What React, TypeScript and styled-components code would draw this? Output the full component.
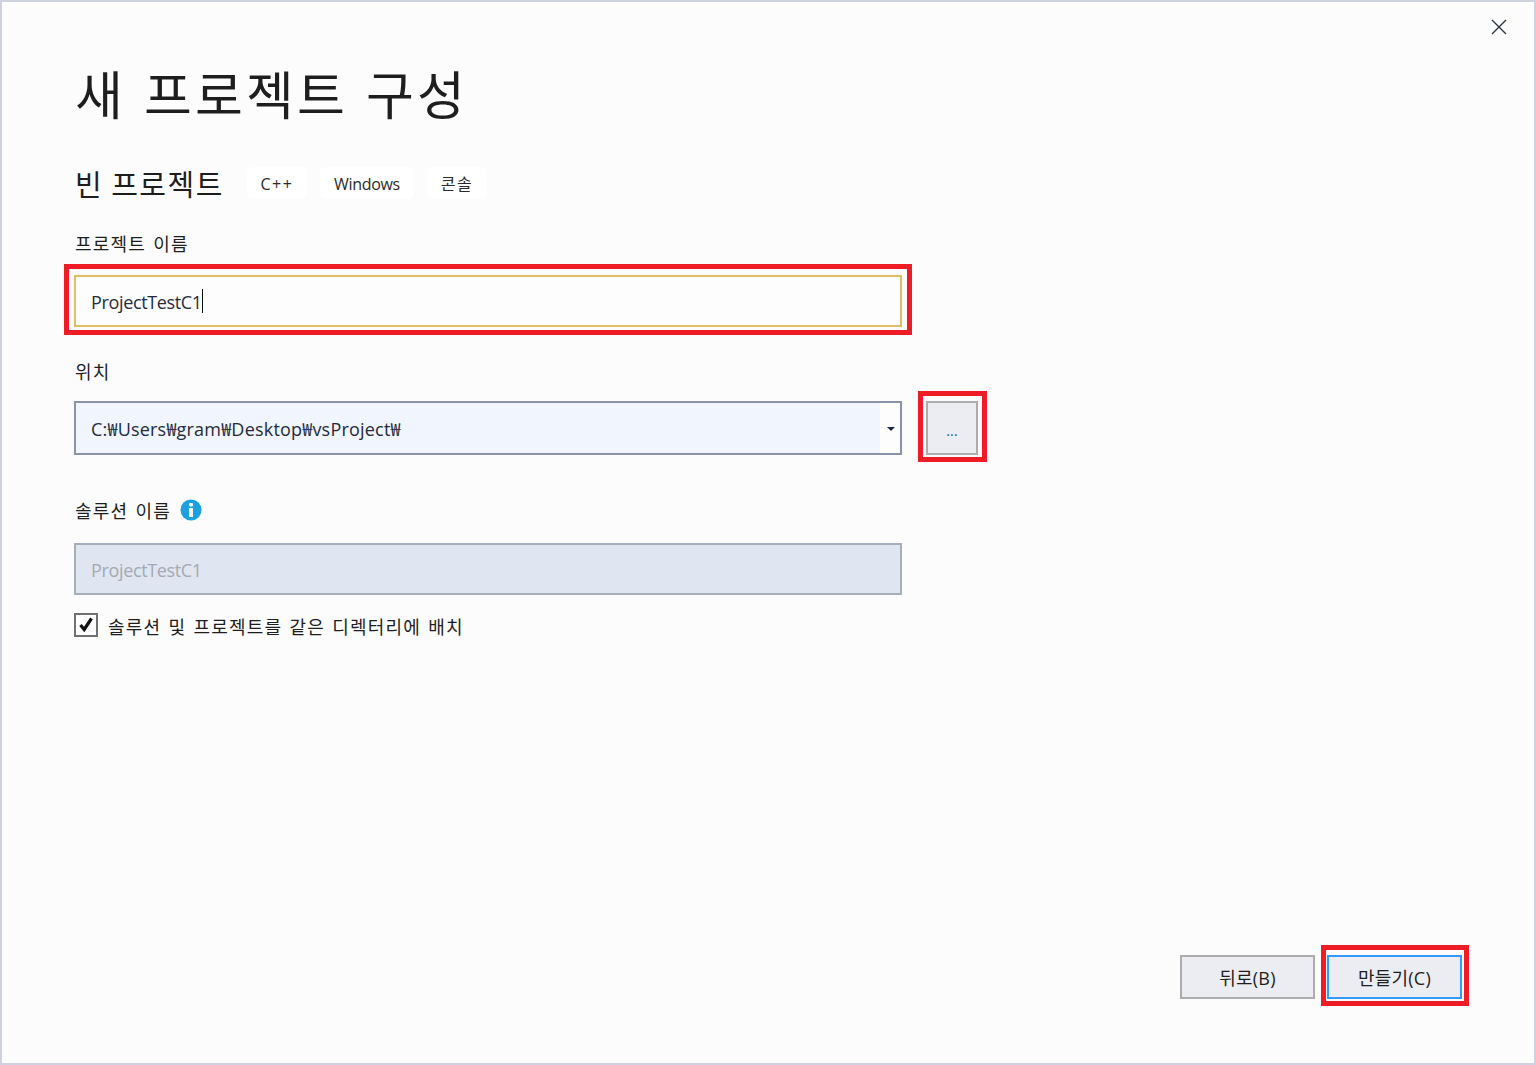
import React from 'react';
import styled, { createGlobalStyle } from 'styled-components';

const GlobalStyle = createGlobalStyle`
  html, body {
    margin: 0;
    padding: 0;
    background: #fcfcfc;
  }
  body {
    font-family: "Open Sans", "Noto Sans CJK KR", sans-serif;
    color: #1e1e1e;
  }
`

const Window = styled.div`
  box-sizing: border-box;
  width: 1536px;
  height: 1065px;
  border: 2px solid #cdd1e0;
  background: #fcfcfc;
  display: flex;
  flex-direction: column;
`

const TitleBar = styled.div`
  height: 58px;
  display: flex;
  justify-content: flex-end;
  align-items: flex-start;
  padding: 17px 27px 0 0;
  box-sizing: border-box;
`

const CloseButton = styled.button`
  border: 0;
  background: none;
  padding: 0;
  width: 16px;
  height: 16px;
  display: flex;
  color: #2b3548;
`

const Content = styled.div`
  flex: 1;
  display: flex;
  flex-direction: column;
  padding: 0 72px 64px;
`

const Title = styled.h1`
  margin: 0;
  height: 70px;
  line-height: 66px;
  font-size: 52px;
  font-weight: 400;
  letter-spacing: 3.2px;
  word-spacing: 3px;
  padding-left: 1px;
  font-family: "Noto Sans CJK KR", sans-serif;
`

const SubtitleRow = styled.div`
  margin-top: 37px;
  height: 32px;
  display: flex;
  align-items: center;
  gap: 13px;
`

const Subtitle = styled.h2`
  margin: 0 10px 0 1px;
  font-size: 29px;
  font-weight: 400;
  font-family: "Noto Sans CJK KR", sans-serif;
  letter-spacing: 1.5px;
  word-spacing: 0;
  line-height: 32px;
  white-space: nowrap;
`

const Chip = styled.span<{ $width: number; $tracking: number }>`
  box-sizing: border-box;
  width: ${p => p.$width}px;
  height: 32px;
  border-radius: 6px;
  background: #fff;
  font-size: 16px;
  line-height: 34px;
  text-align: center;
  letter-spacing: ${p => p.$tracking}px;
  color: #2a2a2a;
`

const Label = styled.div<{ $top: number }>`
  margin-top: ${p => p.$top}px;
  height: 24px;
  line-height: 24px;
  font-size: 18px;
  font-weight: 400;
  display: flex;
  align-items: center;
  font-family: "Noto Sans CJK KR", sans-serif;
  letter-spacing: 1.2px;
  word-spacing: 2px;
  padding-left: 1px;
`

const FieldRow = styled.div<{ $top: number }>`
  margin-top: ${p => p.$top}px;
  display: flex;
  gap: 24px;
`

const Field = styled.div`
  position: relative;
  box-sizing: border-box;
  width: 828px;
  height: 52px;
  padding-left: 15px;
  border: 2px solid #e3be63;
  background: #fdfdfd;
  font-size: 18px;
  letter-spacing: -0.35px;
  line-height: 50px;
  display: flex;
  color: #242c3a;
`

const DisabledField = styled(Field)`
  border-color: #a6aebd;
  background: #dfe6f1;
  color: #a5a9b2;
`

const Caret = styled.span`
  width: 1px;
  height: 24px;
  margin-top: 12px;
  background: #111;
`

const Combo = styled.div`
  box-sizing: border-box;
  width: 828px;
  height: 54px;
  border: 2px solid #8a94a8;
  background: #fdfdfd;
  display: flex;
`

const ComboValue = styled.div`
  flex: 1;
  padding-left: 15px;
  background: #f0f5fe;
  font-size: 18px;
  letter-spacing: 0.2px;
  line-height: 52px;
  color: #242c3a;
`

const ComboArrow = styled.div`
  width: 20px;
  padding: 2px 0 0 1px;
  box-sizing: border-box;
  display: flex;
  align-items: center;
  justify-content: center;

  &::before {
    content: '';
    border-top: 4px solid #1e2a44;
    border-left: 4px solid transparent;
    border-right: 4px solid transparent;
  }
`

const Button = styled.button<{ $accent?: boolean }>`
  position: relative;
  box-sizing: border-box;
  width: 135px;
  height: 44px;
  padding: 0;
  border: 2px solid ${p => (p.$accent ? '#3399ff' : '#acacac')};
  background: #ecedf2;
  color: #1e1e1e;
  font-family: "Open Sans", "Noto Sans CJK KR", sans-serif;
  font-size: 18px;
  letter-spacing: 0.2px;
`

const BrowseButton = styled(Button)`
  width: 52px;
  height: 54px;
  font-size: 14px;
  color: #1c5a96;
  padding-top: 4px;
`

// red annotation boxes drawn on top of the screenshot
const Highlight = styled.span<{ $t: number; $r: number; $b: number; $l: number }>`
  position: absolute;
  top: ${p => p.$t}px;
  right: ${p => p.$r}px;
  bottom: ${p => p.$b}px;
  left: ${p => p.$l}px;
  border: 5px solid #ee1c25;
  pointer-events: none;
`

const InfoIcon = styled.svg`
  margin-left: 9px;
  width: 22px;
  height: 22px;
`

const CheckRow = styled.label`
  margin-top: 18px;
  display: flex;
  align-items: center;
  height: 24px;
  font-size: 18px;
  font-weight: 400;
  font-family: "Noto Sans CJK KR", sans-serif;
  letter-spacing: 1.2px;
  word-spacing: 2px;
`

const CheckText = styled.span`
  padding-top: 2px;
`

const CheckBox = styled.span`
  box-sizing: border-box;
  width: 24px;
  height: 24px;
  margin-right: 10px;
  border: 2px solid #707070;
  background: #fff;
  display: flex;
  align-items: center;
  justify-content: center;
`

const Footer = styled.div`
  margin-top: auto;
  display: flex;
  justify-content: flex-end;
  gap: 12px;
`

const App: React.FC = () => {
  return (
    <Window>
      <GlobalStyle />
      <TitleBar>
        <CloseButton aria-label="닫기">
          <svg width="16" height="16" viewBox="0 0 16 16">
            <path d="M1 1L15 15M15 1L1 15" stroke="currentColor" strokeWidth="1.4" fill="none" />
          </svg>
        </CloseButton>
      </TitleBar>
      <Content>
        <Title>새 프로젝트 구성</Title>
        <SubtitleRow>
          <Subtitle>빈 프로젝트</Subtitle>
          <Chip $width={60} $tracking={1.5}>C++</Chip>
          <Chip $width={94} $tracking={-0.3}>Windows</Chip>
          <Chip $width={60} $tracking={1.5}>콘솔</Chip>
        </SubtitleRow>

        <Label $top={32}>프로젝트 이름</Label>
        <FieldRow $top={20}>
          <Field>
            ProjectTestC1
            <Caret />
            <Highlight $t={-13} $r={-12} $b={-10} $l={-12} />
          </Field>
        </FieldRow>

        <Label $top={32}>위치</Label>
        <FieldRow $top={18}>
          <Combo>
            <ComboValue>C:₩Users₩gram₩Desktop₩vsProject₩</ComboValue>
            <ComboArrow />
          </Combo>
          <BrowseButton>
            ...
            <Highlight $t={-12} $r={-11} $b={-9} $l={-10} />
          </BrowseButton>
        </FieldRow>

        <Label $top={43}>
          솔루션 이름
          <InfoIcon viewBox="0 0 22 22">
            <circle cx="11" cy="11" r="10.5" fill="#1ba1e2" />
            <rect x="9" y="9" width="4" height="9" fill="#fff" />
            <rect x="9" y="4" width="4" height="3.4" rx="1.2" fill="#fff" />
          </InfoIcon>
        </Label>
        <FieldRow $top={21}>
          <DisabledField>ProjectTestC1</DisabledField>
        </FieldRow>

        <CheckRow>
          <CheckBox>
            <svg width="16" height="16" viewBox="0 0 16 16">
              <path d="M2.5 8L6.2 12.5L13.5 1.5" stroke="#111" strokeWidth="3.2" fill="none" />
            </svg>
          </CheckBox>
          <CheckText>솔루션 및 프로젝트를 같은 디렉터리에 배치</CheckText>
        </CheckRow>

        <Footer>
          <Button>뒤로(B)</Button>
          <Button $accent>
            만들기(C)
            <Highlight $t={-12} $r={-9} $b={-9} $l={-8} />
          </Button>
        </Footer>
      </Content>
    </Window>
  );
}

export default App;
